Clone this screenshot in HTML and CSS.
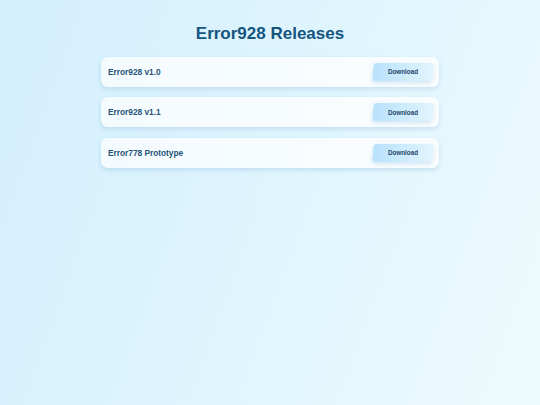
FILE: index.html
```html
<!DOCTYPE html>
<html lang="en">
<head>
    <meta charset="UTF-8">
    <meta name="viewport" content="width=device-width, initial-scale=1.0">
    <title>Error928 Releases</title>
    <link rel="stylesheet" href="styles.css">
</head>
<body>
    <div class="container">
        <h1>Error928 Releases</h1>
        <div class="release">
            <span class="release-name">Error928 v1.0</span>
            <button class="download-button">Download</button>
        </div>
        <div class="release">
            <span class="release-name">Error928 v1.1</span>
            <button class="download-button">Download</button>
        </div>
        <div class="release">
            <span class="release-name">Error778 Prototype</span>
            <button class="download-button">Download</button>
        </div>
    </div>
</body>
</html>
```

FILE: styles.css
```css
html, body {
    height: 100%;
}
body {
    font-family: "Liberation Sans", Arial, sans-serif;
    background: linear-gradient(110deg, #d3eefd 0%, #dff5fe 50%, #eefbfd 100%);
    margin: 0;
    padding: 0;
}
.container {
    width: 338px;
    margin: 0 auto;
    padding-top: 24px;
}
h1 {
    margin: 0 0 12.5px;
    text-align: center;
    font-size: 17px;
    line-height: 20px;
    color: #15557e;
}
.release {
    display: flex;
    align-items: center;
    justify-content: space-between;
    height: 30px;
    margin-bottom: 10.5px;
    padding: 0 6px 0 7px;
    box-sizing: border-box;
    background: linear-gradient(90deg, #f4fbff, #fafdff);
    border-radius: 7px;
    box-shadow: 0 2px 5px rgba(80, 140, 180, 0.22);
}
.release-name {
    font-size: 8.3px;
    font-weight: bold;
    color: #1f5375;
}
.download-button {
    position: relative;
    isolation: isolate;
    width: 60px;
    height: 18px;
    padding: 0;
    border: none;
    background: none;
    font-family: inherit;
    font-size: 6.3px;
    font-weight: bold;
    color: #1f4468;
    cursor: pointer;
}
/* slanted fill behind the label */
.download-button::before {
    content: "";
    position: absolute;
    inset: 0;
    z-index: -1;
    border-radius: 3px;
    background: linear-gradient(90deg, #b8e2fb, #e2f4fe);
    box-shadow: 0 2px 4px rgba(90, 160, 210, 0.25);
    transform: skewX(-6deg);
}
```
